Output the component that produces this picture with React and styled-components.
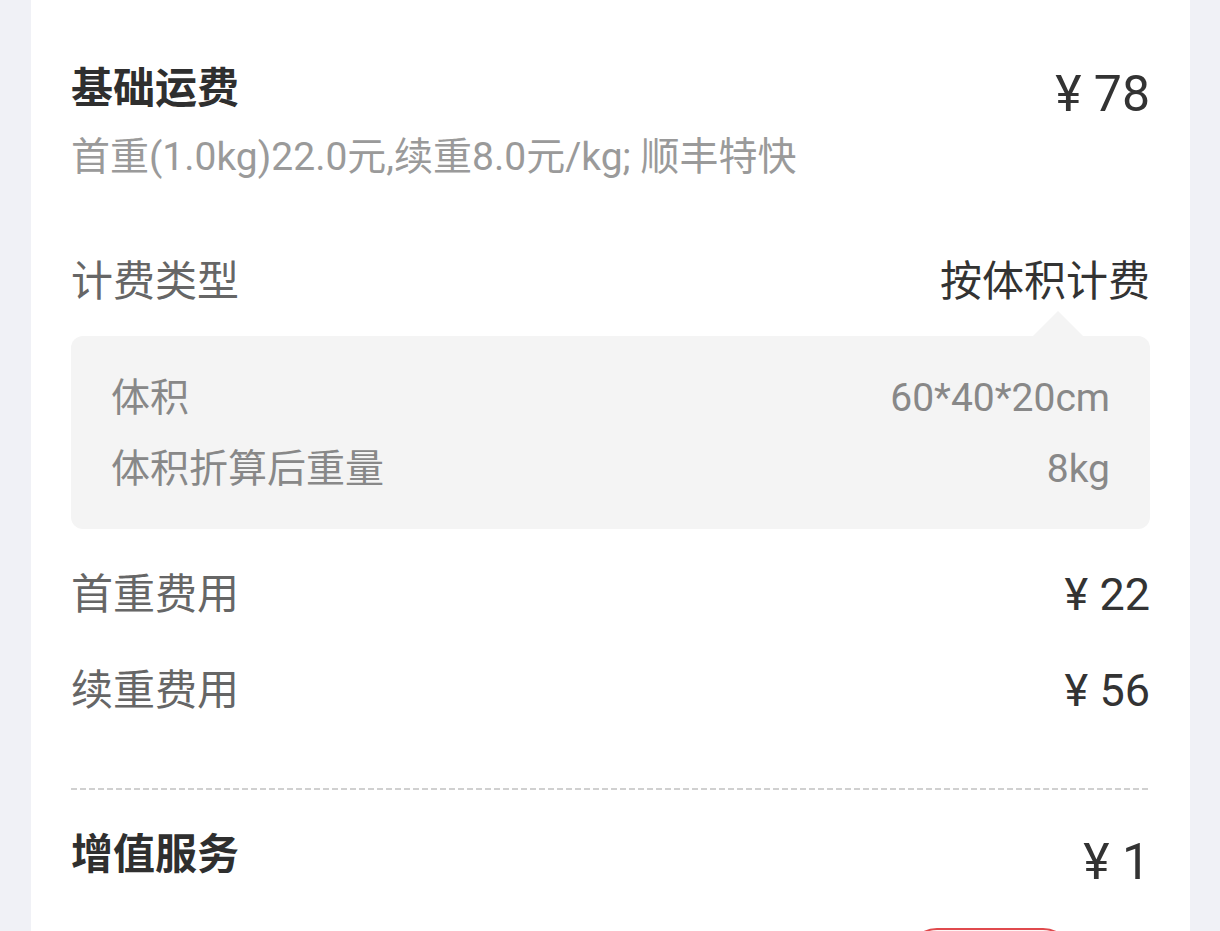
import React from 'react'
import styled, { createGlobalStyle } from 'styled-components'

const GlobalStyle = createGlobalStyle`
  html, body {
    margin: 0;
    padding: 0;
    background: #f0f1f6;
  }
  body {
    font-family: Roboto, "Noto Sans CJK SC", sans-serif;
  }
`

const Page = styled.div`
  padding: 0 30px 0 31px;
  height: 931px;
  overflow: hidden;
`

const Card = styled.div`
  background: #fff;
  padding: 60px 40px 40px;
  min-height: 900px;
`

const HeadRow = styled.div`
  display: flex;
  justify-content: space-between;
  align-items: flex-start;
`

const Title = styled.div`
  font-size: 42px;
  line-height: 58px;
  font-weight: 700;
  color: #2f2f2f;
`

const BigPrice = styled.div`
  font-size: 50px;
  line-height: 58px;
  color: #333;
  margin-top: ${p => p.$offset || 0}px;
`

const Sub = styled.div`
  margin-top: 9px;
  font-size: 39px;
  line-height: 50px;
  color: #9a9a9a;
`

const Row = styled.div`
  display: flex;
  justify-content: space-between;
  align-items: center;
  margin-top: ${p => p.$top}px;
  font-size: 42px;
  line-height: 58px;
`

const Label = styled.span`
  color: #666;
`

const Value = styled.span`
  color: #333;
`

const Price = styled.span`
  color: #333;
  font-size: 45px;
`

const Detail = styled.div`
  position: relative;
  margin-top: 25px;
  background: #f4f4f4;
  border-radius: 12px;
  padding: 37px 40px 35px;
  display: flex;
  flex-direction: column;
  gap: 21px;

  &::before {
    content: '';
    position: absolute;
    top: -25px;
    right: 67px;
    border-left: 25px solid transparent;
    border-right: 25px solid transparent;
    border-bottom: 25px solid #f4f4f4;
  }
`

const DetailRow = styled.div`
  display: flex;
  justify-content: space-between;
  font-size: 39px;
  line-height: 50px;
  color: #888;
`

const Dashed = styled.div`
  margin-top: 68px;
  height: 2px;
  background: repeating-linear-gradient(to right, #d0d0d0 0 6px, transparent 6px 9px);
`

const ServiceHead = styled(HeadRow)`
  margin-top: 36px;
`

const Tags = styled.div`
  display: flex;
  justify-content: flex-end;
  padding-right: 77px;
  margin-top: 37px;
`

const Tag = styled.div`
  width: 166px;
  height: 60px;
  border: 2px solid #e04a4d;
  background: #fff4f4;
  border-radius: 30px;
  box-sizing: border-box;
`

export default function App() {
  return (
    <Page>
      <GlobalStyle />
      <Card>
        <HeadRow>
          <Title>基础运费</Title>
          <BigPrice $offset={5}>¥ 78</BigPrice>
        </HeadRow>
        <Sub>首重(1.0kg)22.0元,续重8.0元/kg; 顺丰特快</Sub>

        <Row $top={71}>
          <Label>计费类型</Label>
          <Value>按体积计费</Value>
        </Row>
        <Detail>
          <DetailRow>
            <span>体积</span>
            <span>60*40*20cm</span>
          </DetailRow>
          <DetailRow>
            <span>体积折算后重量</span>
            <span>8kg</span>
          </DetailRow>
        </Detail>

        <Row $top={37}>
          <Label>首重费用</Label>
          <Price>¥ 22</Price>
        </Row>
        <Row $top={38}>
          <Label>续重费用</Label>
          <Price>¥ 56</Price>
        </Row>

        <Dashed />

        <ServiceHead>
          <Title>增值服务</Title>
          <BigPrice $offset={7}>¥ 1</BigPrice>
        </ServiceHead>
        <Tags>
          <Tag />
        </Tags>
      </Card>
    </Page>
  )
}
